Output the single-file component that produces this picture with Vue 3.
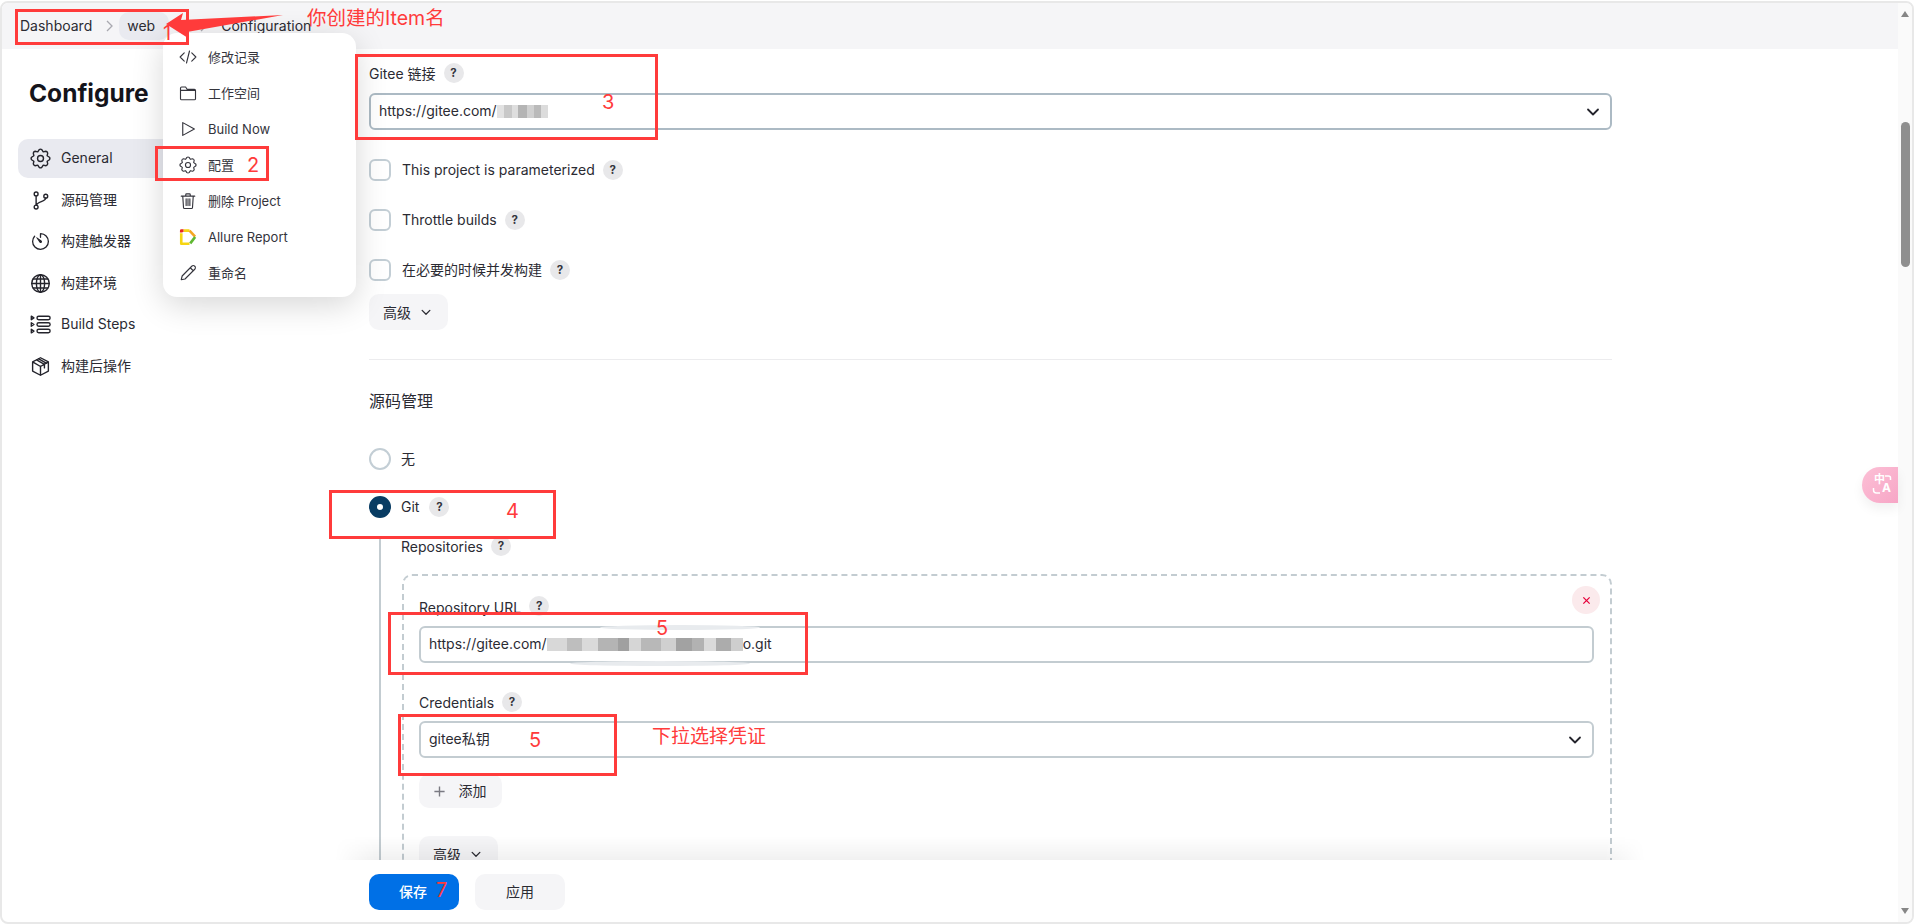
<script setup>
const gearPath = (() => {
  const pts = []
  const n = 8
  for (let i = 0; i < n; i++) {
    const a = (i / n) * Math.PI * 2 - Math.PI / 2
    const s = Math.PI / n
    const p = (r, t) => `${(12 + r * Math.cos(t)).toFixed(2)} ${(12 + r * Math.sin(t)).toFixed(2)}`
    pts.push(`${i === 0 ? 'M' : 'L'}${p(10.3, a - s * 0.36)}`)
    pts.push(`Q${p(11.2, a)} ${p(10.3, a + s * 0.36)}`)
    pts.push(`L${p(8.2, a + s)}`)
  }
  return pts.join(' ') + ' Z'
})()

const navItems = [
  { id: 'gear', label: 'General', active: true },
  { id: 'branch', label: '源码管理' },
  { id: 'timer', label: '构建触发器' },
  { id: 'globe', label: '构建环境' },
  { id: 'steps', label: 'Build Steps' },
  { id: 'cube', label: '构建后操作' }
]
const menuItems = [
  { id: 'code', label: '修改记录' },
  { id: 'folder', label: '工作空间' },
  { id: 'play', label: 'Build Now' },
  { id: 'gear', label: '配置' },
  { id: 'trash', label: '删除 Project' },
  { id: 'allure', label: 'Allure Report' },
  { id: 'pencil', label: '重命名' }
]
const checks = ['This project is parameterized', 'Throttle builds', '在必要的时候并发构建']
</script>

<template>
  <div class="page">
    <div class="shell">
      <div class="column">
        <header class="topbar">
          <span class="crumb">Dashboard</span>
          <svg class="chev" viewBox="0 0 10 14"><path d="M2 2l5 5-5 5" /></svg>
          <span class="crumb pill">web</span>
          <svg class="chev chev-b" viewBox="0 0 10 14"><path d="M2 2l5 5-5 5" /></svg>
          <span class="crumb">Configuration</span>
        </header>

        <div class="body">
          <aside class="sidebar">
            <h1 class="title">Configure</h1>
            <nav>
              <a v-for="item in navItems" :key="item.label" class="nav-item" :class="{ active: item.active }">
                <svg v-if="item.id === 'gear'" class="nav-icon" viewBox="0 0 24 24"><path :d="gearPath" /><circle cx="12" cy="12" r="3.4" /></svg>
                <svg v-else-if="item.id === 'branch'" class="nav-icon" viewBox="0 0 24 24"><circle cx="7" cy="4.5" r="2.2" /><circle cx="7" cy="19.5" r="2.2" /><circle cx="18" cy="7" r="2.2" /><path d="M7 6.7v10.6M18 9.2c0 4.3-10 3.800-10.500 8.200" /></svg>
                <svg v-else-if="item.id === 'timer'" class="nav-icon" viewBox="0 0 512 512"><path class="wide" d="M112.91 128A191.85 191.85 0 0064 254c-1.180 106.350 85.650 193.800 192 194 106.200.2 192-85.830 192-192 0-104.540-83.550-189.610-187.500-192a4.360 4.360 0 00-4.500 4.370V152" /><path class="solid" d="M233.380 278.630l-79-113a8.130 8.130 0 0111.320-11.320l113 79a32.500 32.500 0 01-37.250 53.260 33.210 33.210 0 01-8.070-7.940z" /></svg>
                <svg v-else-if="item.id === 'globe'" class="nav-icon" viewBox="0 0 24 24"><circle cx="12" cy="12" r="10" /><ellipse cx="12" cy="12" rx="4.700" ry="10" /><path d="M12 2v20M2 12h20M3.500 6.800h17M3.500 17.200h17" /></svg>
                <svg v-else-if="item.id === 'steps'" class="nav-icon" viewBox="0 0 24 24"><path d="M1.500 2.500l3 2-3 2zM1.500 10l3 2-3 2zM1.500 17.500l3 2-3 2z" /><rect x="8" y="2.500" width="15" height="4" rx="2" /><rect x="8" y="10" width="15" height="4" rx="2" /><rect x="8" y="17.500" width="15" height="4" rx="2" /></svg>
                <svg v-else class="nav-icon" viewBox="0 0 24 24"><path d="M12 2 3 6.800v10.400L12 22l9-4.800V6.800zM3 6.800 12 12l9-5.200M12 12v10M7.500 4.400l9 5.200v4M10 3.200l9 5.200" /></svg>
                <span>{{ item.label }}</span>
              </a>
            </nav>
          </aside>

          <main class="content">
            <div class="label-row"><span>Gitee 链接</span><i class="help">?</i></div>
            <div class="field strong">
              <span class="value">https://gitee.com/<b class="blur blur-a"></b></span>
              <svg class="select-arrow" viewBox="0 0 14 10"><path d="M2 2.500l5 5 5-5" /></svg>
            </div>

            <div class="checks">
              <label v-for="c in checks" :key="c" class="check">
                <span class="box"></span><span class="check-text">{{ c }}</span><i class="help">?</i>
              </label>
            </div>

            <button class="btn adv"><span class="btn-text">高级</span><svg class="btn-arrow" viewBox="0 0 14 10"><path d="M2.500 2.500 7 7l4.500-4.500" /></svg></button>
            <hr class="rule" />
            <h2 class="section">源码管理</h2>

            <div class="radio"><span class="ring"></span><span>无</span></div>
            <div class="radio radio-git"><span class="ring on"></span><span>Git</span><i class="help">?</i></div>

            <section class="git">
              <div class="label-row compact"><span>Repositories</span><i class="help">?</i></div>
              <div class="repo">
                <div class="label-row url-label"><span>Repository URL</span><i class="help">?</i></div>
                <div class="field">
                  <span class="value">https://gitee.com/<b class="blur blur-b"></b>o.git</span>
                </div>
                <div class="label-row cred"><span>Credentials</span><i class="help">?</i></div>
                <div class="field select-field">
                  <span class="value">gitee私钥</span>
                  <svg class="select-arrow" viewBox="0 0 14 10"><path d="M2 2.500l5 5 5-5" /></svg>
                </div>
                <button class="btn add"><svg class="plus" viewBox="0 0 14 14"><path d="M7 1.500v11M1.500 7h11" /></svg>添加</button>
                <button class="btn adv adv-repo"><span class="btn-text">高级</span><svg class="btn-arrow" viewBox="0 0 14 10"><path d="M2.500 2.500 7 7l4.500-4.500" /></svg></button>
              </div>
            </section>
          </main>
        </div>
      </div>

      <div class="scrollbar">
        <svg class="sb-arrow" viewBox="0 0 10 8"><path d="M5 1l4 6H1z" /></svg>
        <div class="sb-track"><div class="sb-thumb"></div></div>
        <svg class="sb-arrow" viewBox="0 0 10 8"><path d="M5 7 1 1h8z" /></svg>
      </div>
    </div>

    <div class="close-btn"><svg viewBox="0 0 10 10"><path d="M1.500 1.500l7 7M8.500 1.500l-7 7" /></svg></div>
    <div class="smear smear-top"></div>
    <div class="smear smear-bottom"></div>

    <div class="translate">
      <span class="t-zh">中</span><span class="t-en">A</span>
      <svg class="t-marks" viewBox="0 0 24 24"><path d="M15 3h3.500a2 2 0 0 1 2 2v2M3.500 15v2a3 3 0 0 0 3 3H10" /></svg>
    </div>

    <footer class="footer">
      <button class="btn primary">保存</button>
      <button class="btn apply">应用</button>
    </footer>

    <ul class="menu">
      <li v-for="m in menuItems" :key="m.label" class="menu-item">
        <svg v-if="m.id === 'code'" class="menu-icon" viewBox="0 0 24 24"><path d="M7 6.500 1.500 12 7 17.500M17 6.500l5.500 5.500-5.500 5.500M14 4l-4 16" /></svg>
        <svg v-else-if="m.id === 'folder'" class="menu-icon" viewBox="0 0 24 24"><path d="M2 7V5.500A1.500 1.500 0 0 1 3.500 4h5.300l2 3H20.500A1.500 1.500 0 0 1 22 8.500v11a1.500 1.500 0 0 1-1.500 1.500h-17A1.500 1.500 0 0 1 2 19.500zM2 8.500h20" /></svg>
        <svg v-else-if="m.id === 'play'" class="menu-icon" viewBox="0 0 24 24"><path d="M5 3.500v17L20.500 12z" /></svg>
        <svg v-else-if="m.id === 'gear'" class="menu-icon" viewBox="0 0 24 24"><path :d="gearPath" /><circle cx="12" cy="12" r="3.400" /></svg>
        <svg v-else-if="m.id === 'trash'" class="menu-icon" viewBox="0 0 24 24"><path d="M3 5.500h18M9 5.500V3.500a1 1 0 0 1 1-1h4a1 1 0 0 1 1 1v2M5 5.500l1 15a1.500 1.500 0 0 0 1.500 1.500h9a1.500 1.500 0 0 0 1.500-1.500l1-15M9.500 9v9M12 9v9M14.500 9v9" /></svg>
        <svg v-else-if="m.id === 'allure'" class="menu-icon allure" viewBox="0 0 24 24">
          <path stroke="#f6d512" d="M3 7v14h11M6 3.500h8" />
          <path stroke="#e8281f" d="M3 6V3.500h3" />
          <path stroke="#f5a623" d="M14 3.500l7.500 8" />
          <path stroke="#5fb832" d="M21.500 12 15 20.500" />
        </svg>
        <svg v-else class="menu-icon" viewBox="0 0 24 24"><path d="M3 21l1.200-5L17 3a2.500 2.500 0 0 1 4 4L8 20zM15 5l4 4" /></svg>
        <span class="menu-text">{{ m.label }}</span>
      </li>
    </ul>

    <svg class="arrow" viewBox="0 0 130 30"><path d="M1 15 18 4l-2 7 102-5-96 17 1 6z" /></svg>
    <div class="mark box-1"></div>
    <div class="mark box-2"></div>
    <div class="mark box-3"></div>
    <div class="mark box-4"></div>
    <div class="mark box-5a"></div>
    <div class="mark box-5b"></div>
    <span class="note n-1">1</span>
    <span class="note n-2">2</span>
    <span class="note n-3">3</span>
    <span class="note n-4">4</span>
    <span class="note n-5a">5</span>
    <span class="note n-5b">5</span>
    <span class="note n-7">7</span>
    <span class="note t-item">你创建的Item名</span>
    <span class="note t-cred">下拉选择凭证</span>
  </div>
</template>

<style>
html, body { margin: 0; background: #fff; overflow: hidden; }
</style>

<style scoped>
.page {
  position: relative;
  width: 1917px;
  height: 924px;
  overflow: hidden;
  background: #fff;
  color: #2b2b33;
  font: 14px/1.2 Inter, "Noto Sans CJK SC", sans-serif;
}
.shell {
  box-sizing: border-box;
  display: flex;
  width: 1914px;
  height: 923px;
  margin-top: 1px;
  border: 2px solid #e8e8e8;
  border-radius: 8px;
  overflow: hidden;
}
.column { width: 1896px; display: flex; flex-direction: column; min-width: 0; }
.topbar {
  flex: none;
  height: 46px;
  display: flex;
  align-items: center;
  padding-left: 18px;
  background: #f5f5f7;
}
.crumb { white-space: nowrap; }
.pill {
  display: flex;
  align-items: center;
  width: 42px;
  height: 28px;
  padding: 0 0 0 8px;
  margin-right: -8px;
  border-radius: 10px;
  background: #e9eaf0;
}
.chev { width: 10px; height: 14px; margin: 0 4px 0 13px; fill: none; stroke: #a9a9b0; stroke-width: 1.300; }
.chev-b { margin: 0 12px 0 38px; }

.body { flex: 1; display: flex; min-height: 0; overflow: hidden; }
.sidebar { flex: none; width: 367px; box-sizing: border-box; padding: 29px 0 0 16px; }
.title { margin: 0 0 31px 11px; font-size: 24.500px; line-height: 30px; font-weight: 700; color: #14141b; }
.nav-item {
  display: flex;
  align-items: center;
  gap: 10px;
  width: 190px;
  height: 39px;
  margin-bottom: 2.600px;
  padding-left: 12px;
  box-sizing: border-box;
  border-radius: 10px;
}
.nav-item.active { background: #e9eaf0; }
.nav-icon { flex: none; width: 21px; height: 21px; fill: none; stroke: #24242c; stroke-width: 1.600; stroke-linecap: round; stroke-linejoin: round; }
.nav-icon .wide { stroke-width: 32px; }
.nav-icon .solid { fill: #24242c; stroke: none; }

.content { flex: none; width: 1243px; padding-top: 13px; }
.label-row { display: flex; align-items: center; gap: 8px; height: 22px; }
.label-row > span { padding-top: 2px; }
.label-row.compact { height: 16px; }
.url-label > span { padding-top: 4px; }
.help {
  flex: none;
  width: 20px;
  height: 20px;
  border-radius: 50%;
  background: #e8e8ea;
  color: #33333b;
  font: 700 11.500px/20px Inter, sans-serif;
  text-align: center;
}
.field {
  box-sizing: border-box;
  display: flex;
  align-items: center;
  justify-content: space-between;
  height: 37px;
  margin-top: 9px;
  padding: 0 10px 0 8px;
  border: 2px solid #c3ccd1;
  border-radius: 6px;
  background: #fff;
}
.field.strong { border-color: #acbac4; }
.value { display: inline-flex; align-items: center; white-space: nowrap; }
.select-arrow { width: 14px; height: 10px; fill: none; stroke: #24242c; stroke-width: 1.800; stroke-linecap: round; stroke-linejoin: round; }
.blur { display: inline-block; height: 13px; filter: blur(0.500px); }
.blur-a {
  width: 51px;
  background: linear-gradient(90deg, #e2e2e2 0 14%, #c8c8c8 14% 30%, #dedede 30% 42%, #b4b4b4 42% 58%, #d0d0d0 58% 72%, #bababa 72% 86%, #dcdcdc 86%);
}
.blur-b {
  width: 196px;
  background: linear-gradient(90deg, #d8d8d8 0 10%, #bebebe 10% 18%, #dadada 18% 26%, #b4b4b4 26% 36%, #a0a0a0 36% 42%, #d6d6d6 42% 48%, #b8b8b8 48% 58%, #d0d0d0 58% 66%, #a2a2a2 66% 74%, #b2b2b2 74% 80%, #dadada 80% 86%, #acacac 86% 94%, #cecece 94%);
}
.smear { position: absolute; height: 5px; background: #e8ebee; border-radius: 50%; filter: blur(0.600px); }
.smear-top { left: 600px; top: 625px; width: 160px; }
.smear-bottom { left: 570px; top: 661px; width: 180px; background: #e8ebee; }

.checks { display: flex; flex-direction: column; gap: 29px; margin-top: 29px; }
.check { display: flex; align-items: center; height: 21px; gap: 11px; }
.check .help { margin-left: -3px; }
.check-text { padding-top: 2px; }
.box { box-sizing: border-box; width: 22px; height: 22px; border: 2px solid #c3ced5; border-radius: 6px; }

.btn {
  display: inline-flex;
  align-items: center;
  justify-content: center;
  border: 0;
  border-radius: 10px;
  background: #f5f5f7;
  color: #2b2b33;
  font: inherit;
}
.adv { display: flex; width: 79px; height: 36px; gap: 9px; margin-top: 14px; padding: 0 2px 0 0; }
.btn-text { padding-top: 2px; }
.btn-arrow { width: 12px; height: 9px; fill: none; stroke: #2b2b33; stroke-width: 1.500; stroke-linecap: round; stroke-linejoin: round; }
.rule { height: 1px; margin: 29px 0 0; border: 0; background: #ececee; }
.section { margin: 30px 0 0; height: 22px; font-size: 16px; line-height: 22px; font-weight: 400; }

.radio { display: flex; align-items: center; gap: 10px; height: 22px; margin-top: 36px; }
.radio-git { margin-top: 26px; }
.radio-git .help { margin-left: 0; }
.ring { box-sizing: border-box; width: 22px; height: 22px; border: 2px solid #c3ced5; border-radius: 50%; }
.ring.on { border: 8px solid #083c63; background: #fff; }

.git { margin: 20px 0 0 10px; padding-left: 20px; border-left: 2px solid #c3ccd1; }
.repo {
  box-sizing: border-box;
  height: 340px;
  margin: 20px 0 0 1px;
  padding: 19px 16px 0 15px;
  border: 2px dashed #c3ccd1;
  border-radius: 10px;
}
.cred { margin-top: 28px; }
.select-field { margin-top: 8px; }
.add { display: flex; width: 83px; height: 34px; gap: 13px; margin-top: 16px; padding: 0 2px 0 0; }
.plus { width: 13px; height: 13px; fill: none; stroke: #7a7a82; stroke-width: 1.500; }
.adv-repo { margin-top: 28px; }

.scrollbar { flex: none; width: 14px; display: flex; flex-direction: column; align-items: center; background: #fafafa; }
.sb-arrow { flex: none; width: 10px; height: 8px; margin: 7px 0; fill: #868686; }
.sb-track { flex: 1; width: 9px; }
.sb-thumb { width: 9px; height: 145px; margin-top: 97px; border-radius: 5px; background: #8f8f8f; }

.close-btn {
  position: absolute;
  left: 1572px;
  top: 586px;
  width: 28px;
  height: 28px;
  display: flex;
  align-items: center;
  justify-content: center;
  border-radius: 50%;
  background: #fbeaec;
}
.close-btn svg { width: 9px; height: 9px; fill: none; stroke: #e6003a; stroke-width: 1.400; }

.translate {
  position: absolute;
  left: 1862px;
  top: 467px;
  width: 36px;
  height: 36px;
  border-radius: 18px 0 0 18px;
  background: linear-gradient(135deg, #fcc0d6, #f7a6c6);
  box-shadow: 0 6px 12px rgba(0, 0, 0, .06);
  color: #fff;
}
.t-zh { position: absolute; left: 12px; top: 4px; font: 700 11px/14px "Noto Sans CJK SC", sans-serif; }
.t-en { position: absolute; left: 20px; top: 14px; font: 700 12px/14px Inter, sans-serif; }
.t-marks { position: absolute; left: 8px; top: 6px; width: 24px; height: 24px; fill: none; stroke: #fff; stroke-width: 1.500; }

.footer {
  position: absolute;
  left: 345px;
  top: 860px;
  box-sizing: border-box;
  display: flex;
  gap: 16px;
  width: 1290px;
  height: 62px;
  padding: 14px 0 0 24px;
  background: #fff;
}
.footer::before {
  content: "";
  position: absolute;
  left: -10px;
  right: -10px;
  top: -24px;
  height: 24px;
  background: linear-gradient(180deg, rgba(0, 0, 0, 0), rgba(0, 0, 0, .055));
  -webkit-mask-image: linear-gradient(90deg, transparent, #000 40px, #000 calc(100% - 40px), transparent);
  mask-image: linear-gradient(90deg, transparent, #000 40px, #000 calc(100% - 40px), transparent);
}
.footer .btn { width: 90px; height: 36px; }
.footer .primary { padding: 0 2px 0 0; }
.primary { background: #0070e6; color: #fff; font-weight: 500; }

.menu {
  position: absolute;
  left: 163px;
  top: 33px;
  box-sizing: border-box;
  width: 193px;
  height: 264px;
  margin: 0;
  padding: 6px 0;
  list-style: none;
  border-radius: 14px;
  background: #fff;
  box-shadow: 0 8px 32px rgba(0, 0, 0, .16);
  font-size: 13px;
}
.menu-item { display: flex; align-items: center; gap: 11px; height: 36px; padding-left: 16px; color: #34343c; }
.menu-text { padding-top: 1px; }
.menu-icon { flex: none; width: 18px; height: 18px; fill: none; stroke: #34343c; stroke-width: 1.500; stroke-linecap: round; stroke-linejoin: round; }
.menu-icon.allure { stroke-width: 3.500; stroke-linecap: butt; }

.arrow { position: absolute; left: 165px; top: 9px; width: 130px; height: 30px; fill: #ff3b3b; }
.mark { position: absolute; box-sizing: border-box; border: 3px solid #ff3b3b; }
.box-1 { left: 15px; top: 9px; width: 174px; height: 36px; }
.box-2 { left: 155px; top: 146px; width: 114px; height: 35px; }
.box-3 { left: 355px; top: 54px; width: 303px; height: 86px; }
.box-4 { left: 329px; top: 490px; width: 227px; height: 49px; }
.box-5a { left: 388px; top: 612px; width: 420px; height: 63px; }
.box-5b { left: 398px; top: 714px; width: 219px; height: 62px; }
.note { position: absolute; color: #ff3b3b; font-size: 20px; line-height: 24px; white-space: nowrap; }
.n-1 { left: 163px; top: 21px; }
.n-2 { left: 247px; top: 153px; }
.n-3 { left: 602px; top: 90px; }
.n-4 { left: 506px; top: 499px; }
.n-5a { left: 656px; top: 616px; }
.n-5b { left: 529px; top: 728px; }
.n-7 { left: 436px; top: 878px; }
.t-item { left: 307px; top: 6px; font-size: 19.500px; }
.t-cred { left: 652px; top: 725px; font-size: 19px; }
</style>
